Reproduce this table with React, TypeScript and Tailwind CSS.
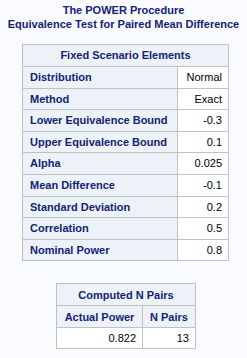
const rows: [string, string][] = [
  ["Distribution", "Normal"],
  ["Method", "Exact"],
  ["Lower Equivalence Bound", "-0.3"],
  ["Upper Equivalence Bound", "0.1"],
  ["Alpha", "0.025"],
  ["Mean Difference", "-0.1"],
  ["Standard Deviation", "0.2"],
  ["Correlation", "0.5"],
  ["Nominal Power", "0.8"],
];

const font = { fontFamily: '"Liberation Sans", Arial, sans-serif' };

export default function App() {
  return (
    <div className="w-[247px] h-[358px] bg-[#fafbfe] text-[11px]" style={font}>
      <div className="pt-[3px] text-center font-bold text-[#112277] text-[11px] leading-[14px] whitespace-nowrap">
        <div>The POWER Procedure</div>
        <div>Equivalence Test for Paired Mean Difference</div>
      </div>

      <table className="mt-[13px] ml-[22px] w-[207px] border-collapse border border-[#c1c1c1]">
        <thead>
          <tr className="h-[22px]">
            <th colSpan={2} className="border border-[#c1c1c1] bg-[#edf2f9] text-[#112277] font-bold text-center px-[6px]">
              Fixed Scenario Elements
            </th>
          </tr>
        </thead>
        <tbody>
          {rows.map(([label, value]) => (
            <tr key={label} className="h-[21.6px]">
              <th className="border border-[#c1c1c1] bg-[#edf2f9] text-[#112277] font-bold text-left px-[7px]">{label}</th>
              <td className="border border-[#c1c1c1] bg-white text-black text-right px-[6px] w-[51px]">{value}</td>
            </tr>
          ))}
        </tbody>
      </table>

      <table className="mt-[22px] ml-[56px] w-[140px] border-collapse border border-[#c1c1c1]">
        <thead>
          <tr className="h-[22px]">
            <th colSpan={2} className="border border-[#c1c1c1] bg-[#edf2f9] text-[#112277] font-bold text-center">
              Computed N Pairs
            </th>
          </tr>
          <tr className="h-[22px]">
            <th className="border border-[#c1c1c1] bg-[#edf2f9] text-[#112277] font-bold text-center px-[6px] w-[86px]">Actual Power</th>
            <th className="border border-[#c1c1c1] bg-[#edf2f9] text-[#112277] font-bold text-center px-[6px]">N Pairs</th>
          </tr>
        </thead>
        <tbody>
          <tr className="h-[21px]">
            <td className="border border-[#c1c1c1] bg-white text-black text-right px-[6px]">0.822</td>
            <td className="border border-[#c1c1c1] bg-white text-black text-right px-[6px]">13</td>
          </tr>
        </tbody>
      </table>
    </div>
  );
}
